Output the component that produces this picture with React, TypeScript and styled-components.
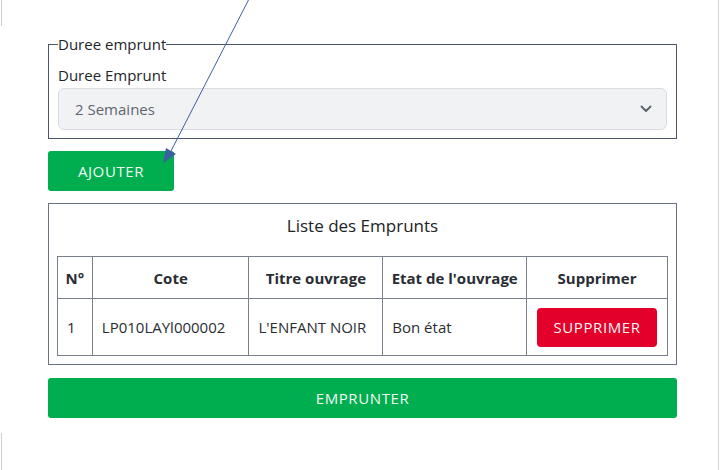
import React from "react";
import styled, { createGlobalStyle } from "styled-components";

const Global = createGlobalStyle`
  html, body { margin: 0; padding: 0; background: #ffffff; }
  body { font-family: "Open Sans", "Noto Sans", sans-serif; color: #212529; }
  * { box-sizing: border-box; }
`;

const Page = styled.div`
  position: relative;
  width: 722px;
  height: 470px;
  overflow: hidden;
  &::before {
    content: "";
    position: absolute;
    left: 1px;
    top: 0;
    width: 1px;
    height: 26px;
    background: #cfcfcf;
  }
  &::after {
    content: "";
    position: absolute;
    left: 1px;
    top: 433px;
    width: 1px;
    height: 37px;
    background: #cfcfcf;
  }
`;

const Frame = styled.div`
  width: 719px;
  height: 470px;
  border-right: 1px solid #d4d4d4;
  padding: 35px 0 0 48px;
`;

const Content = styled.div`
  width: 629px;
  display: flex;
  flex-direction: column;
  align-items: flex-start;
`;

const Fieldset = styled.fieldset`
  width: 100%;
  margin: 0;
  border: 1px solid #4b5567;
  padding: 0 9px 8px;
`;

const Legend = styled.legend`
  padding: 0;
  margin-left: 0;
  font-size: 15px;
  line-height: 18px;
  color: #212529;
`;

const Label = styled.div`
  font-size: 15px;
  line-height: 20px;
  margin: 12px 0 3px;
  color: #212529;
`;

const Select = styled.div`
  height: 42px;
  background: #f1f2f4;
  border: 1px solid #d9dce1;
  border-radius: 6px;
  display: flex;
  align-items: center;
  justify-content: space-between;
  padding: 0 14px 0 16px;
  font-size: 15px;
  color: #5f6671;
`;

const Button = styled.button<{ $variant: "green" | "red"; $full?: boolean }>`
  height: ${(p) => (p.$variant === "red" ? "39px" : "40px")};
  width: ${(p) => (p.$full ? "100%" : "auto")};
  padding: 0 ${(p) => (p.$variant === "red" ? "16px" : "20px")};
  border: none;
  border-radius: ${(p) => (p.$variant === "red" ? "4px" : "3px")};
  background: ${(p) => (p.$variant === "red" ? "#e3002b" : "#00ae4f")};
  color: #f3f7f5;
  font-family: inherit;
  font-size: 15px;
  letter-spacing: 0.6px;
  text-transform: uppercase;
  display: inline-flex;
  align-items: center;
  justify-content: center;
`;

const AddButton = styled(Button)`
  margin-top: 12px;
  width: 126px;
`;

const Card = styled.div`
  margin-top: 12px;
  width: 100%;
  border: 1px solid #6b7280;
  padding: 0 8px 8px;
`;

const CardTitle = styled.div`
  text-align: center;
  font-size: 17px;
  line-height: 20px;
  padding: 12px 0 20px;
  color: #222;
`;

const Table = styled.table`
  width: 100%;
  border-collapse: collapse;
  font-size: 15px;
  color: #2a2d33;
`;

const Th = styled.th<{ $w: number }>`
  width: ${(p) => p.$w}px;
  height: 42px;
  border: 1px solid #7a808b;
  font-weight: 700;
  text-align: center;
  padding: 0 4px;
  white-space: nowrap;
`;

const Td = styled.td`
  height: 57px;
  border: 1px solid #7a808b;
  padding: 0 9px;
  white-space: nowrap;
`;

const TdCenter = styled(Td)`
  text-align: center;
  padding: 0 8px;
`;

const SubmitButton = styled(Button)`
  margin-top: 13px;
`;

const Arrow = styled.svg`
  position: absolute;
  left: 0;
  top: 0;
  pointer-events: none;
`;

export default function App() {
  return (
    <>
      <Global />
      <Page>
        <Frame>
          <Content>
            <Fieldset>
              <Legend>Duree emprunt</Legend>
              <Label>Duree Emprunt</Label>
              <Select>
                <span>2 Semaines</span>
                <svg width="12" height="8" viewBox="0 0 12 8">
                  <path d="M1.5 1.5 L6 6 L10.5 1.5" fill="none" stroke="#5a606b" strokeWidth="1.8" strokeLinecap="round" strokeLinejoin="round" />
                </svg>
              </Select>
            </Fieldset>
            <AddButton $variant="green">Ajouter</AddButton>
            <Card>
              <CardTitle>Liste des Emprunts</CardTitle>
              <Table>
                <thead>
                  <tr>
                    <Th $w={35}>N°</Th>
                    <Th $w={157}>Cote</Th>
                    <Th $w={134}>Titre ouvrage</Th>
                    <Th $w={144}>Etat de l'ouvrage</Th>
                    <Th $w={141}>Supprimer</Th>
                  </tr>
                </thead>
                <tbody>
                  <tr>
                    <Td>1</Td>
                    <Td>LP010LAYl000002</Td>
                    <Td>L'ENFANT NOIR</Td>
                    <Td>Bon état</Td>
                    <TdCenter>
                      <Button $variant="red">Supprimer</Button>
                    </TdCenter>
                  </tr>
                </tbody>
              </Table>
            </Card>
            <SubmitButton $variant="green" $full>Emprunter</SubmitButton>
          </Content>
        </Frame>
        <Arrow width="722" height="470" viewBox="0 0 722 470">
          <line x1="249" y1="-1" x2="171" y2="151" stroke="#3c5fa0" strokeWidth="1" />
          <polygon points="163,163 166,148 176,154" fill="#3c5fa0" />
        </Arrow>
      </Page>
    </>
  );
}
